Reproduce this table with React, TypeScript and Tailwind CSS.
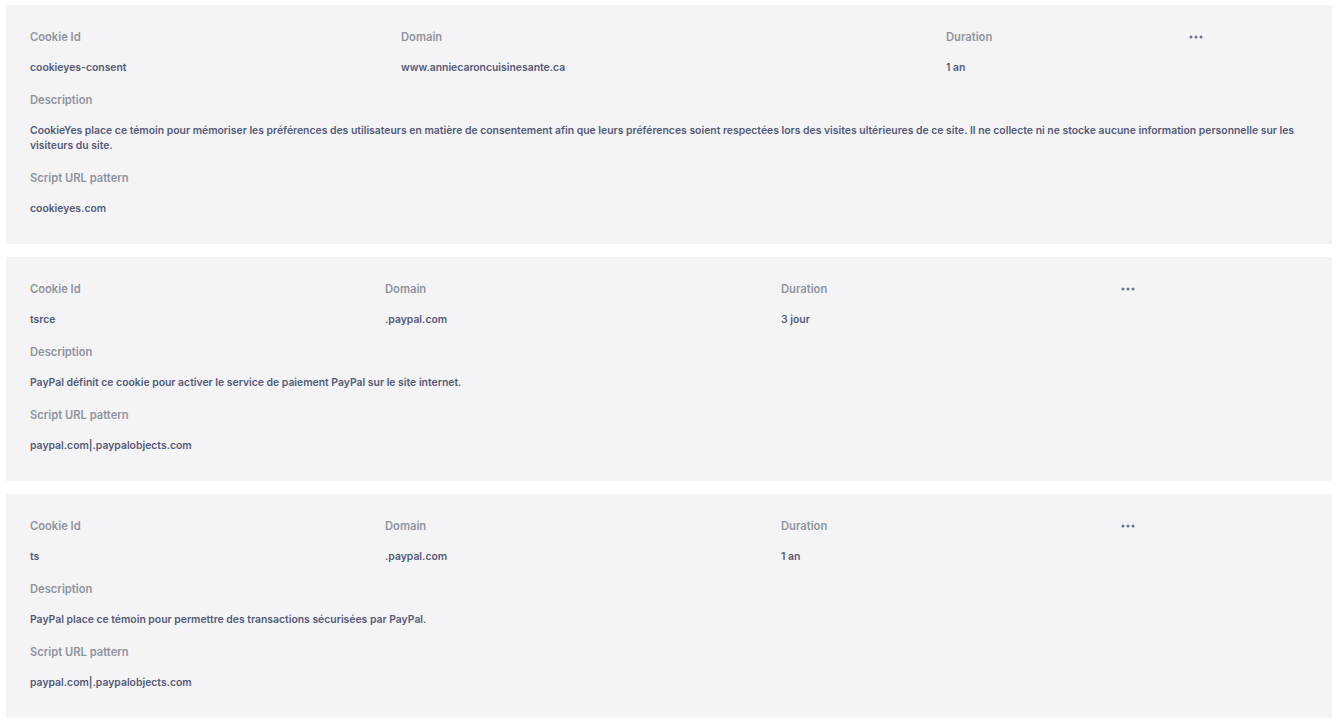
type Cookie = {
  id: string;
  domain: string;
  duration: string;
  description: string;
  pattern: string;
  cols: string;
};

const cookies: Cookie[] = [
  {
    id: "cookieyes-consent",
    domain: "www.anniecaroncuisinesante.ca",
    duration: "1 an",
    description:
      "CookieYes place ce témoin pour mémoriser les préférences des utilisateurs en matière de consentement afin que leurs préférences soient respectées lors des visites ultérieures de ce site. Il ne collecte ni ne stocke aucune information personnelle sur les visiteurs du site.",
    pattern: "cookieyes.com",
    cols: "grid-cols-[371px_545px_243px_1fr]",
  },
  {
    id: "tsrce",
    domain: ".paypal.com",
    duration: "3 jour",
    description:
      "PayPal définit ce cookie pour activer le service de paiement PayPal sur le site internet.",
    pattern: "paypal.com|.paypalobjects.com",
    cols: "grid-cols-[355px_396px_340px_1fr]",
  },
  {
    id: "ts",
    domain: ".paypal.com",
    duration: "1 an",
    description:
      "PayPal place ce témoin pour permettre des transactions sécurisées par PayPal.",
    pattern: "paypal.com|.paypalobjects.com",
    cols: "grid-cols-[355px_396px_340px_1fr]",
  },
];

function Label({ children }: { children: React.ReactNode }) {
  return (
    <div className="text-[11.2px] leading-[15px] font-semibold text-[#8f939d]">
      {children}
    </div>
  );
}

function Value({ children }: { children: React.ReactNode }) {
  return (
    <div className="text-[10.4px] leading-[15px] font-semibold text-[#545b78]">
      {children}
    </div>
  );
}

function Dots() {
  return (
    <svg width="14" height="4" viewBox="0 0 14 4" className="mt-[5px]">
      <circle cx="2" cy="2" r="1.5" fill="#6a7090" />
      <circle cx="7" cy="2" r="1.5" fill="#6a7090" />
      <circle cx="12" cy="2" r="1.5" fill="#6a7090" />
    </svg>
  );
}

function CookieCard({ cookie }: { cookie: Cookie }) {
  return (
    <div className="bg-[#f4f4f6] pl-6 pr-[26px] pt-[25px] pb-[28px]">
      <div className={`grid ${cookie.cols} gap-y-[15px]`}>
        <Label>Cookie Id</Label>
        <Label>Domain</Label>
        <Label>Duration</Label>
        <div className="h-[15px]">
          <Dots />
        </div>
        <Value>{cookie.id}</Value>
        <Value>{cookie.domain}</Value>
        <Value>{cookie.duration}</Value>
        <div />
      </div>
      <div className="mt-[18px] flex flex-col gap-[15px]">
        <Label>Description</Label>
        <Value>{cookie.description}</Value>
      </div>
      <div className="mt-[18px] flex flex-col gap-[15px]">
        <Label>Script URL pattern</Label>
        <Value>{cookie.pattern}</Value>
      </div>
    </div>
  );
}

export default function App() {
  return (
    <div className="min-h-screen bg-white pl-[6px] pr-[4px] pt-[5px] font-['Inter','Noto_Sans',sans-serif]">
      <div className="flex flex-col gap-[13px]">
        {cookies.map((c) => (
          <CookieCard key={c.id} cookie={c} />
        ))}
      </div>
    </div>
  );
}
